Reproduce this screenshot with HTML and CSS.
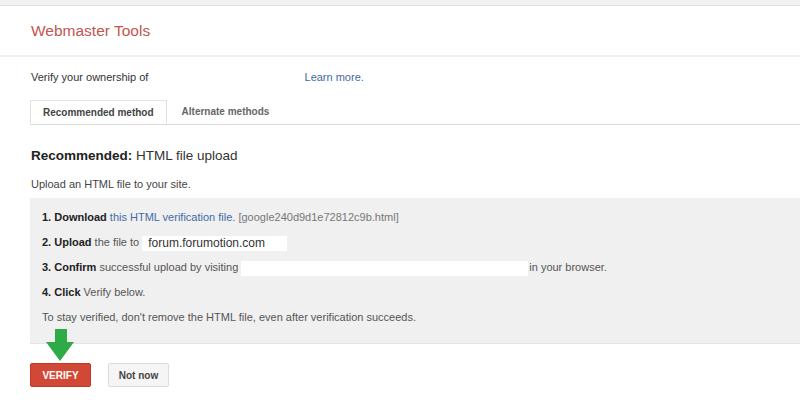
FILE: index.html
```html
<!DOCTYPE html>
<html lang="en">

<head>
    <meta charset="UTF-8">
    <meta name="viewport" content="width=device-width, initial-scale=1.0">
    <link rel="stylesheet" href="styles.css">
    <title>Webmaster Tools - Verify ownership</title>
</head>

<body>

    <div class="topbar"></div>

    <header class="header">
        <h1 class="header-title">Webmaster Tools</h1>
    </header>

    <main class="content">
        <p class="ownership">
            Verify your ownership of
            <span class="site-blank"></span>
            <a class="link" href="#">Learn more.</a>
        </p>

        <div class="tabs">
            <div class="tab active">Recommended method</div>
            <div class="tab">Alternate methods</div>
        </div>

        <h2 class="method-title"><b>Recommended:</b> HTML file upload</h2>
        <p class="method-desc">Upload an HTML file to your site.</p>

        <!-- các bước xác minh -->
        <div class="steps">
            <div class="step"><b>1. Download</b> <a class="link" href="#">this HTML verification file.</a> <span class="file-name">[google240d9d1e72812c9b.html]</span></div>
            <div class="step"><b>2. Upload</b> the file to <span class="field field-host">forum.forumotion.com</span></div>
            <div class="step"><b>3. Confirm</b> successful upload by visiting<span class="field field-url"></span>in your browser.</div>
            <div class="step"><b>4. Click</b> Verify below.</div>
            <div class="step">To stay verified, don't remove the HTML file, even after verification succeeds.</div>
        </div>

        <div class="actions">
            <svg class="arrow" width="28" height="32" viewBox="0 0 28 32">
                <polygon points="9,0 21,0 21,13 28,13 14,32 0,13 9,13" fill="#2eaa47" />
            </svg>
            <button class="btn btn-verify">VERIFY</button>
            <button class="btn btn-later">Not now</button>
        </div>
    </main>

</body>

</html>
```

FILE: styles.css
```css
body {
    margin: 0;
    font-family: "Liberation Sans", Arial, sans-serif;
    color: #444;
    background-color: #fff;
}

.topbar {
    height: 5px;
    background-color: #f1f1f1;
    border-bottom: 1px solid #e2e2e2;
}

.header {
    height: 49px;
    padding-left: 31px;
    border-bottom: 2px solid #f1f1f1;
}

.header-title {
    margin: 0;
    line-height: 49px;
    font-size: 15.5px;
    font-weight: normal;
    color: #c2564f;
}

.content {
    padding-left: 30px;
}

.ownership {
    margin: 12px 0 0 1px;
    font-size: 11px;
    line-height: 16px;
    color: #333;
}

.site-blank {
    display: inline-block;
    width: 150px;
}

.link {
    color: #3f6aa5;
    text-decoration: none;
}

.tabs {
    display: flex;
    margin-top: 15px;
    height: 24px;
    border-bottom: 1px solid #dadada;
}

.tab {
    padding: 0 15px;
    line-height: 23px;
    font-size: 10px;
    font-weight: bold;
    color: #666;
}

.tab.active {
    padding: 0 12px;
    color: #444;
    background-color: #fff;
    border: 1px solid #e2e2e2;
    border-bottom: 1px solid #fff;
}

.method-title {
    margin: 22px 0 0 1px;
    font-size: 13.5px;
    line-height: 18px;
    font-weight: normal;
    color: #333;
}

.method-title b {
    color: #222;
}

.method-desc {
    margin: 11px 0 0 1px;
    font-size: 11px;
    line-height: 16px;
    color: #444;
}

.steps {
    margin-top: 6px;
    padding: 7px 0 13px 12px;
    background-color: #f0f0f0;
    border-bottom: 1px solid #e4e4e4;
}

.step {
    line-height: 25px;
    font-size: 11px;
    color: #555;
}

.step b {
    color: #222;
}

.file-name {
    color: #777;
}

.field {
    display: inline-block;
    height: 15px;
    line-height: 15px;
    vertical-align: middle;
    background-color: #fff;
}

.field-host {
    width: 139px;
    padding-left: 6px;
    font-size: 12px;
    color: #333;
}

.field-url {
    width: 287px;
    margin-left: 3px;
    margin-right: 1px;
}

.actions {
    position: relative;
    display: flex;
    gap: 17px;
    margin-top: 19px;
}

.arrow {
    position: absolute;
    left: 16px;
    top: -34px;
}

.btn {
    height: 24px;
    width: 61px;
    padding: 0;
    font-family: inherit;
    font-size: 10px;
    font-weight: bold;
    border-radius: 2px;
    cursor: pointer;
}

.btn-verify {
    color: #fff;
    background-color: #d14836;
    border: 1px solid #c53727;
}

.btn-later {
    color: #444;
    background-color: #f5f5f5;
    border: 1px solid #dcdcdc;
}
```
